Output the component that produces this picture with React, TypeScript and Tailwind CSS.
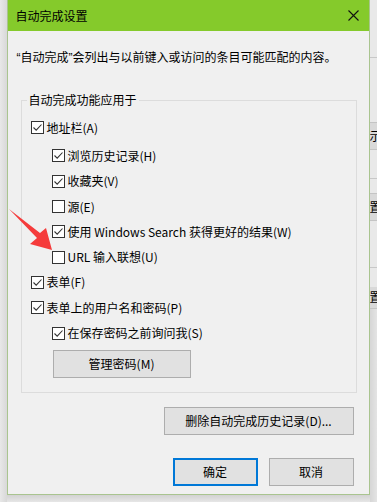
import { ReactNode } from 'react';

const font = { fontFamily: '"Noto Sans CJK SC", "Noto Sans", sans-serif' };

function Check({ checked }: { checked: boolean }) {
  return (
    <span className="flex h-[13px] w-[13px] shrink-0 items-center justify-center border border-[#333333] bg-white">
      {checked && (
        <svg width="11" height="11" viewBox="0 0 11 11" fill="none">
          <path d="M1.5 5.5 L4.2 8.2 L9.5 2.5" stroke="#333333" strokeWidth="1.1" />
        </svg>
      )}
    </span>
  );
}

function Row({ checked, indent, children }: { checked: boolean; indent?: boolean; children: ReactNode }) {
  return (
    <div className={`flex h-[25.3px] items-center gap-[3px] ${indent ? 'pl-[30px]' : 'pl-[9px]'}`}>
      <Check checked={checked} />
      <span className="whitespace-nowrap text-[12px] leading-[16px]">{children}</span>
    </div>
  );
}

function Button({ children, className = '', primary }: { children: ReactNode; className?: string; primary?: boolean }) {
  return (
    <button
      type="button"
      className={`flex h-[28px] items-center justify-center bg-[#e1e1e1] text-[12px] leading-[16px] text-black ${
        primary ? 'border-2 border-[#0078d7]' : 'border border-[#adadad]'
      } ${className}`}
    >
      {children}
    </button>
  );
}

function Dialog() {
  return (
    <div className="flex h-[495px] w-[363px] flex-col border-x border-b border-[#a9c48f] bg-[#f0f0f0]">
      <div className="flex h-[31px] shrink-0 items-center justify-between bg-[#85ca2b] pl-[8px] pr-[10px]">
        <span className="text-[12px] leading-[16px] text-black">自动完成设置</span>
        <svg width="11" height="11" viewBox="0 0 11 11">
          <path d="M0.5 0.5 L10.5 10.5 M10.5 0.5 L0.5 10.5" stroke="#111111" strokeWidth="1.1" />
        </svg>
      </div>

      <p className="mt-[18px] pl-[9px] text-[12px] leading-[16px] whitespace-nowrap">
        <span className="font-['Liberation_Sans']">“</span>自动完成<span className="font-['Liberation_Sans']">”</span>
        会列出与以前键入或访问的条目可能匹配的内容。
      </p>

      <fieldset className="mt-[26px] ml-[13px] w-[336px] border border-[#dcdcdc] pb-[14px]">
        <legend className="ml-[5px] px-[2px] text-[12px] leading-[16px]">自动完成功能应用于</legend>
        <div className="mt-[7px]">
          <Row checked>地址栏(A)</Row>
        </div>
        <div className="mt-[3px]">
          <Row checked indent>浏览历史记录(H)</Row>
          <Row checked indent>收藏夹(V)</Row>
          <Row checked={false} indent>源(E)</Row>
          <Row checked indent>使用 Windows Search 获得更好的结果(W)</Row>
          <Row checked={false} indent>URL 输入联想(U)</Row>
          <Row checked>表单(F)</Row>
          <Row checked>表单上的用户名和密码(P)</Row>
          <Row checked indent>在保存密码之前询问我(S)</Row>
        </div>
        <Button className="mt-[4px] ml-[31px] w-[138px]">管理密码(M)</Button>
      </fieldset>

      <div className="mt-[14px] flex justify-end pr-[15px]">
        <Button className="w-[190px]">删除自动完成历史记录(D)...</Button>
      </div>

      <div className="mt-[23px] flex justify-end gap-[11px] pr-[15px]">
        <Button primary className="h-[27px] w-[85px]">确定</Button>
        <Button className="h-[27px] w-[85px]">取消</Button>
      </div>
    </div>
  );
}

// the window behind the dialog, only its left edge shows
function BackWindow() {
  return (
    <div className="flex w-[8px] flex-col overflow-hidden bg-[#e9e9e9] text-[12px] leading-[16px]">
      <div className="h-[58px] border-b border-[#c8c8c8]" />
      <div className="h-[64px]" />
      <div className="h-[28px] overflow-hidden whitespace-nowrap border-y border-[#c4c4c4] bg-[#d9d9d9] pt-[5px]">示</div>
      <div className="h-[29px] border-b border-[#c8c8c8]" />
      <div className="h-[14px]" />
      <div className="h-[28px] overflow-hidden whitespace-nowrap border-y border-[#c4c4c4] bg-[#d9d9d9] pt-[5px]">置</div>
      <div className="h-[47px] border-b border-[#c8c8c8]" />
      <div className="h-[19px]" />
      <div className="h-[22px] overflow-hidden whitespace-nowrap border-b border-[#c4c4c4] bg-[#d9d9d9] pt-[2px]">置</div>
      <div className="flex-1 bg-gradient-to-r from-[#d6d6d6] to-[#e4e4e4]" />
    </div>
  );
}

export default function App() {
  return (
    <div className="relative flex h-[502px] w-[377px] overflow-hidden bg-[#e4e4e4] text-black" style={font}>
      <div className="w-[7px] bg-gradient-to-r from-[#e8e8e8] to-[#d8d8d8]" />
      <div className="flex flex-col">
        <Dialog />
        <div className="h-[7px] bg-gradient-to-b from-[#d2d2d2] to-[#e6e6e6]" />
      </div>
      <BackWindow />

      <svg className="pointer-events-none absolute left-0 top-0" width="60" height="260" viewBox="0 0 60 260">
        <polygon points="9,209 40,233 46,228 52,250 30,244 37,238" fill="#f53b3b" />
      </svg>
    </div>
  );
}
